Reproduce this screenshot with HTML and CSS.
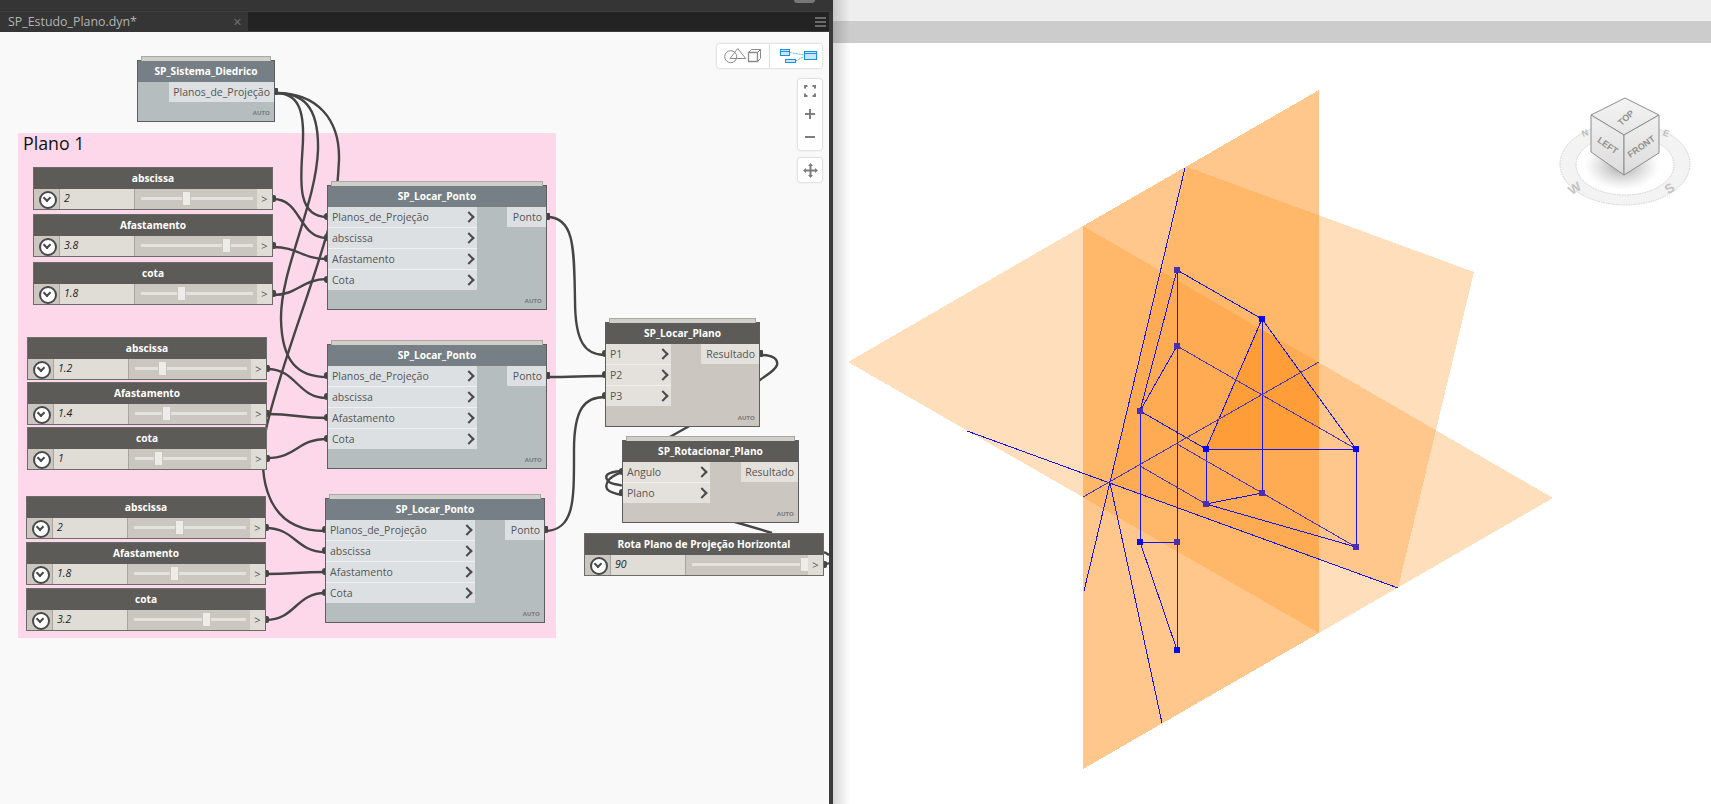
FILE: index.html
```html
<!DOCTYPE html>
<html lang="pt">
<head>
<meta charset="utf-8">
<title>SP_Estudo_Plano.dyn</title>
<link rel="stylesheet" href="styles.css">
</head>
<body>
<div class="app">
  <section class="dynamo">
    <div class="titlebar"><span class="grip"></span></div>
    <div class="tabrow">
      <div class="tab"><span class="tab-name">SP_Estudo_Plano.dyn*</span><span class="tab-close">✕</span></div>
      <div class="tab-rest"><span class="burger"><i></i><i></i><i></i></span></div>
    </div>
    <div class="canvas">
      <div class="group"><span class="group-title">Plano 1</span></div>

      <svg class="wires" viewBox="0 32 829 772" aria-hidden="true">
        <path d="M276 93C298 93 304 110 303 140C302 170 293 217 327 217"/>
        <path d="M276 93C302 93 319 105 318 150C316 205 280 270 281 320C282 362 298 377 327 377"/>
        <path d="M276 93C318 93 340 120 339 160C338 185 336 190 336 200C320 270 285 350 267 425C258 462 258 531 325 531"/>
        <path d="M273 199C302 199 298 238 327 238"/>
        <path d="M273 247C298 247 302 259 327 259"/>
        <path d="M273 295C298 295 302 279 327 279"/>
        <path d="M267 369C297 369 297 398 327 398"/>
        <path d="M267 414C297 414 297 418 327 418"/>
        <path d="M267 458C297 458 297 439 327 439"/>
        <path d="M266 528C295 528 296 552 325 552"/>
        <path d="M266 574C295 574 296 572 325 572"/>
        <path d="M266 620C295 620 296 593 325 593"/>
        <path d="M547 217C575 217 574 250 575 300C575 342 585 355 605 355"/>
        <path d="M547 377C570 377 585 376 605 376"/>
        <path d="M545 531C575 530 574 500 574 450C574 408 585 397 605 397"/>
        <path d="M760 355C775 355 778 360 777 365C775 371 765 376 760 380L700 420L668 438"/>
        <path d="M622 471C606 472 604 476 608 481C611 485 620 484 622 486"/>
        <path d="M622 495C606 492 604 488 608 481C611 476 620 473 622 472"/>
        <path d="M735 522L772 533"/>
        <path d="M824 565L829 563"/>
        <path d="M824 552L829 555"/>
      </svg>

      <!-- Custom nodes -->
      <div class="node node-blue n-sistema">
        <div class="node-head">SP_Sistema_Diedrico</div>
        <div class="node-body">
          <div class="outputs solo"><div class="row out">Planos_de_Projeção</div></div>
        </div>
        <span class="auto">AUTO</span>
      </div>

      <div class="node node-blue n-ponto n-ponto-1">
        <div class="node-head">SP_Locar_Ponto</div>
        <div class="node-body">
          <div class="inputs"><div class="row in">Planos_de_Projeção</div><div class="row in">abscissa</div><div class="row in">Afastamento</div><div class="row in">Cota</div></div>
          <div class="outputs"><div class="row out">Ponto</div></div>
        </div>
        <span class="auto">AUTO</span>
      </div>

      <div class="node node-blue n-ponto n-ponto-2">
        <div class="node-head">SP_Locar_Ponto</div>
        <div class="node-body">
          <div class="inputs"><div class="row in">Planos_de_Projeção</div><div class="row in">abscissa</div><div class="row in">Afastamento</div><div class="row in">Cota</div></div>
          <div class="outputs"><div class="row out">Ponto</div></div>
        </div>
        <span class="auto">AUTO</span>
      </div>

      <div class="node node-blue n-ponto n-ponto-3">
        <div class="node-head">SP_Locar_Ponto</div>
        <div class="node-body">
          <div class="inputs"><div class="row in">Planos_de_Projeção</div><div class="row in">abscissa</div><div class="row in">Afastamento</div><div class="row in">Cota</div></div>
          <div class="outputs"><div class="row out">Ponto</div></div>
        </div>
        <span class="auto">AUTO</span>
      </div>

      <div class="node node-warm n-plano">
        <div class="node-head">SP_Locar_Plano</div>
        <div class="node-body">
          <div class="inputs"><div class="row in">P1</div><div class="row in">P2</div><div class="row in">P3</div></div>
          <div class="outputs"><div class="row out">Resultado</div></div>
        </div>
        <span class="auto">AUTO</span>
      </div>

      <div class="node node-warm n-rotacionar">
        <div class="node-head">SP_Rotacionar_Plano</div>
        <div class="node-body">
          <div class="inputs"><div class="row in">Angulo</div><div class="row in">Plano</div></div>
          <div class="outputs"><div class="row out">Resultado</div></div>
        </div>
        <span class="auto">AUTO</span>
      </div>

      <!-- Sliders -->
      <div class="slider s-1a"><div class="slider-head">abscissa</div><div class="slider-row"><span class="chev"></span><span class="value">2</span><span class="track"><span class="thumb" style="left:52px"></span></span><span class="gt">&gt;</span></div></div>
      <div class="slider s-1b"><div class="slider-head">Afastamento</div><div class="slider-row"><span class="chev"></span><span class="value">3.8</span><span class="track"><span class="thumb" style="left:92px"></span></span><span class="gt">&gt;</span></div></div>
      <div class="slider s-1c"><div class="slider-head">cota</div><div class="slider-row"><span class="chev"></span><span class="value">1.8</span><span class="track"><span class="thumb" style="left:47px"></span></span><span class="gt">&gt;</span></div></div>

      <div class="slider s-2a"><div class="slider-head">abscissa</div><div class="slider-row"><span class="chev"></span><span class="value">1.2</span><span class="track"><span class="thumb" style="left:34px"></span></span><span class="gt">&gt;</span></div></div>
      <div class="slider s-2b"><div class="slider-head">Afastamento</div><div class="slider-row"><span class="chev"></span><span class="value">1.4</span><span class="track"><span class="thumb" style="left:38px"></span></span><span class="gt">&gt;</span></div></div>
      <div class="slider s-2c"><div class="slider-head">cota</div><div class="slider-row"><span class="chev"></span><span class="value">1</span><span class="track"><span class="thumb" style="left:30px"></span></span><span class="gt">&gt;</span></div></div>

      <div class="slider s-3a"><div class="slider-head">abscissa</div><div class="slider-row"><span class="chev"></span><span class="value">2</span><span class="track"><span class="thumb" style="left:52px"></span></span><span class="gt">&gt;</span></div></div>
      <div class="slider s-3b"><div class="slider-head">Afastamento</div><div class="slider-row"><span class="chev"></span><span class="value">1.8</span><span class="track"><span class="thumb" style="left:47px"></span></span><span class="gt">&gt;</span></div></div>
      <div class="slider s-3c"><div class="slider-head">cota</div><div class="slider-row"><span class="chev"></span><span class="value">3.2</span><span class="track"><span class="thumb" style="left:79px"></span></span><span class="gt">&gt;</span></div></div>

      <div class="slider s-rota"><div class="slider-head">Rota Plano de Projeção Horizontal</div><div class="slider-row"><span class="chev"></span><span class="value">90</span><span class="track"><span class="thumb" style="left:119px"></span></span><span class="gt">&gt;</span></div></div>

      <!-- Canvas controls -->
      <div class="controls">
        <div class="toggle">
          <span class="toggle-btn">
            <svg width="52" height="24" viewBox="717 44 52 24">
              <g fill="none" stroke="#8a8a8a" stroke-width="1">
                <circle cx="730.7" cy="56.7" r="6"/>
                <path d="M737.7 48.5L730 58.5H745.7Z"/>
                <path d="M748.5 52.5H757.5V61.5H748.5Z" stroke-width="1.3"/>
                <path d="M748.5 52.5L751.5 49.5H760.5V58.5L757.5 61.5M757.5 52.5L760.5 49.5"/>
              </g>
            </svg>
          </span>
          <span class="toggle-btn">
            <svg width="52" height="24" viewBox="769 44 52 24">
              <g stroke="#55b4f5" stroke-width="1" fill="none">
                <path d="M788.7 52.5L803.3 55M794.7 61L803.3 56.5" stroke-dasharray="2 1"/>
              </g>
              <g fill="#c9e6fb" stroke="#1a8fe8" stroke-width="1">
                <rect x="779.5" y="49.5" width="9" height="6"/>
                <rect x="784.5" y="59.5" width="10" height="3"/>
                <rect x="803.5" y="51.5" width="12" height="8"/>
              </g>
              <path d="M780 51.5H788M804 53.5H815" stroke="#1a8fe8"/>
            </svg>
          </span>
        </div>
        <div class="zoom-box">
          <span class="zoom-btn">
            <svg width="12" height="12" viewBox="0 0 12 12"><path d="M1 3.5V1H3.5M8.5 1H11V3.5M11 8.500V11H8.500M3.500 11H1V8.500" fill="none" stroke="#7d7d7d" stroke-width="2"/></svg>
          </span>
          <span class="zoom-btn">
            <svg width="12" height="12" viewBox="0 0 12 12"><path d="M6 1V11M1 6H11" stroke="#7d7d7d" stroke-width="2"/></svg>
          </span>
          <span class="zoom-btn">
            <svg width="12" height="12" viewBox="0 0 12 12"><path d="M1 6H11" stroke="#7d7d7d" stroke-width="2"/></svg>
          </span>
        </div>
        <div class="pan-box">
          <svg width="15" height="15" viewBox="0 0 15 15"><path d="M7.5 2V13M2 7.5H13" stroke="#7d7d7d" stroke-width="2"/><path d="M7.5 0L10 3H5ZM7.5 15L10 12H5ZM0 7.5L3 5V10ZM15 7.5L12 5V10Z" fill="#7d7d7d"/></svg>
        </div>
      </div>
    </div>
  </section>

  <section class="viewer">
    <div class="viewer-top"></div>
    <div class="viewer-tab"></div>
    <div class="viewport">
      <svg class="scene" viewBox="833 43 878 761" aria-hidden="true">
        <g class="planes">
          <polygon points="1083,226 1319,90 1319,633 1083,769"/>
          <polygon points="1083,226 1319,90 1319,633 1083,769"/>
          <polygon points="848,362 1083,226 1553,498 1319,633"/>
          <polygon points="1187,167 1474,272 1398,588 1110,483"/>
          <polygon class="inner" points="1258,328 1275,337 1319,398 1319,449 1206,449"/>
        </g>
        <g class="lines">
          <path d="M1185 168L1084 591"/>
          <path d="M967 431L1398 588"/>
          <path d="M1110 483L1162 723"/>
          <path d="M1177 270L1262 319L1206 449M1177 270L1140 411L1177 346M1177 270V650L1140 542V411L1206 449"/>
          <path d="M1262 319L1356 449V547L1206 504V449H1356M1262 319V493L1206 504M1140 542H1177"/>
          <path class="dim" d="M1177 346L1356 449M1083 497L1319 362M1140 466L1206 504M1177 444L1356 547"/>
        </g>
        <g class="pts">
          <rect x="1174" y="267" width="6" height="6"/>
          <rect x="1174" y="343" width="6" height="6"/>
          <rect x="1137" y="408" width="6" height="6"/>
          <rect x="1203" y="501" width="6" height="6"/>
          <rect x="1259" y="490" width="6" height="6"/>
          <rect x="1353" y="544" width="6" height="6"/>
          <rect x="1174" y="539" width="6" height="6"/>
        </g>
        <g class="pts bright">
          <rect x="1259" y="316" width="6" height="6"/>
          <rect x="1203" y="446" width="6" height="6"/>
          <rect x="1353" y="446" width="6" height="6"/>
          <rect x="1137" y="539" width="6" height="6"/>
          <rect x="1174" y="647" width="6" height="6"/>
        </g>
      </svg>

      <svg class="navcube" width="140" height="125" viewBox="1555 92 140 125" aria-hidden="true">
        <defs>
          <radialGradient id="cubeShadow">
            <stop offset="0" stop-color="#8e8e8e" stop-opacity=".8"/>
            <stop offset="1" stop-color="#bbb" stop-opacity="0"/>
          </radialGradient>
          <linearGradient id="faceTop" x1="0" y1="0" x2="0" y2="1"><stop offset="0" stop-color="#f4f4f4"/><stop offset="1" stop-color="#e6e6e6"/></linearGradient>
          <linearGradient id="faceSide" x1="0" y1="0" x2="0" y2="1"><stop offset="0" stop-color="#f0f0f0"/><stop offset="1" stop-color="#dcdcdc"/></linearGradient>
        </defs>
        <path fill-rule="evenodd" fill="#f3f3f3" stroke="#cfcfcf" stroke-width="1" stroke-dasharray="1.5 1" d="M1560 164a65 41 0 1 0 130 0a65 41 0 1 0 -130 0ZM1576 165a49 30 0 1 1 98 0a49 30 0 1 1 -98 0Z"/>
        <ellipse cx="1622" cy="166" rx="38" ry="24" fill="url(#cubeShadow)"/>
        <path d="M1625 98L1659 115L1624 135L1591 115Z" fill="url(#faceTop)" stroke="#8d8d8d"/>
        <path d="M1591 115L1624 135V175L1591 152Z" fill="url(#faceSide)" stroke="#8d8d8d"/>
        <path d="M1659 115L1624 135V175L1659 153Z" fill="url(#faceSide)" stroke="#8d8d8d"/>
        <text class="cube-text" transform="translate(1628 120) rotate(-42)" text-anchor="middle">TOP</text>
        <text class="cube-text" transform="translate(1606 148) rotate(35)" text-anchor="middle">LEFT</text>
        <text class="cube-text" transform="translate(1643 149) rotate(-35)" text-anchor="middle">FRONT</text>
        <text class="ring-text" transform="translate(1586 136) rotate(-20)" text-anchor="middle">N</text>
        <text class="ring-text" transform="translate(1665 136) rotate(20)" text-anchor="middle">E</text>
        <text class="ring-text big" transform="translate(1577 192) rotate(-32)" text-anchor="middle">W</text>
        <text class="ring-text big" transform="translate(1672 192) rotate(-35)" text-anchor="middle">S</text>
      </svg>
    </div>
  </section>
</div>
</body>
</html>
```

FILE: styles.css
```css
* { box-sizing: border-box; }
html, body { margin: 0; height: 100%; overflow: hidden; }
body { font-family: "Open Sans", "Liberation Sans", sans-serif; background: #fff; }

.app { display: flex; width: 1711px; height: 804px; }

/* ---------- Dynamo panel ---------- */
.dynamo {
  width: 833px; flex: none; display: flex; flex-direction: column;
  background: #3a3a3a; padding-right: 4px;
  position: relative; z-index: 2;
}
.titlebar { height: 11px; background: #353535; position: relative; flex: none; margin-right: -4px; }
.grip {
  position: absolute; left: 794px; top: 0; width: 21px; height: 3px;
  background: #777; border-radius: 0 0 3px 3px;
}
.tabrow { display: flex; height: 21px; flex: none; border-top: 1px solid #3e3e3e; }
.tab {
  width: 248px; background: #353535; display: flex; align-items: center;
  justify-content: space-between; padding: 0 6px 0 8px;
}
.tab-name { color: #b4b4b4; font-size: 12.4px; line-height: 18px; }
.tab-close { color: #6e6e6e; font-size: 11px; font-weight: 700; font-family: "DejaVu Sans", sans-serif; }
.tab-rest {
  flex: 1; background: #232323; border-bottom: 1px solid #3a3a3a;
  display: flex; align-items: center; justify-content: flex-end; padding-right: 3px;
}
.burger { display: flex; flex-direction: column; gap: 2px; width: 11px; }
.burger i { display: block; height: 2px; background: #6a6a6a; }

.canvas { flex: 1; position: relative; background: #f9f9f9; overflow: hidden; }

.group {
  position: absolute; left: 18px; top: 101px; width: 538px; height: 505px;
  background: #fcd8ea; padding: 0 0 0 5px;
}
.group-title { display: block; font-size: 17.8px; line-height: 20px; color: #111; font-weight: 400; }

.wires { position: absolute; left: 0; top: 0; width: 829px; height: 772px; }
.wires path { fill: none; stroke: #454545; stroke-width: 2.4; }

/* ---------- Nodes ---------- */
.node {
  position: absolute; border: 1px solid #5c5e60; display: flex; flex-direction: column;
}
.node::before {
  content: ""; position: absolute; left: 3px; right: 3px; top: -5px; height: 4px;
  background: #d0cfca; border: 1px solid #a9a8a3; border-bottom: 0;
}
.node-head {
  height: 21px; flex: none; color: #fff; font-weight: 700; font-size: 10.2px; line-height: 21px;
  text-align: center;
}
.node-body { flex: 1; display: flex; justify-content: space-between; align-items: flex-start; }
.inputs, .outputs { display: flex; flex-direction: column; }
.row {
  height: 21px; font-size: 10.5px; line-height: 20px; color: #555; position: relative;
  white-space: nowrap;
}
.row.in { padding-left: 4px; border-bottom: 1px solid #eef0f1; }
.row.in:last-child { border-bottom: 0; height: 20px; }
.row.out { padding: 0 4px; height: 20px; text-align: right; }
.row.in::before, .row.out::after {
  content: ""; position: absolute; top: 6px; width: 3px; height: 7px; background: #454545;
}
.row.in::before { left: -4px; border-radius: 3px 0 0 3px; }
.row.out::after { right: -4px; border-radius: 0 1px 1px 0; }
.n-rotacionar .row.out::after { display: none; }
.row.in::after {
  content: ""; position: absolute; right: 4px; top: 6px; width: 6px; height: 6px;
  border-top: 2px solid #4a4a4a; border-right: 2px solid #4a4a4a; transform: rotate(45deg);
}
.auto {
  position: absolute; right: 4px; bottom: 4px; font-size: 6px; line-height: 7px;
  font-weight: 700; color: #777; letter-spacing: .1px;
}

.node-blue { background: #b6bdbf; }
.node-blue .node-head { background: #757f85; }
.node-blue .row { background: #dce0e2; }
.node-warm { background: #cbc7c0; }
.node-warm .node-head { background: #5d5b58; }
.node-warm .row { background: #e4e1dc; }
.node-warm .row.in { border-bottom-color: #f2f0ed; }

.n-sistema { left: 137px; top: 28px; width: 138px; height: 62px; }
.n-sistema .solo { margin-left: auto; }
.n-sistema .row.out { width: 105px; }

.n-ponto { width: 220px; height: 125px; }
.n-ponto .inputs { width: 149px; }
.n-ponto .row.out { width: 39px; }
.n-ponto-1 { left: 327px; top: 153px; }
.n-ponto-2 { left: 327px; top: 312px; }
.n-ponto-3 { left: 325px; top: 466px; }

.n-plano { left: 605px; top: 290px; width: 155px; height: 105px; }
.n-plano .inputs { width: 65px; }
.n-plano .row.out { width: 58px; }
.n-rotacionar { left: 622px; top: 408px; width: 177px; height: 83px; }
.n-rotacionar .inputs { width: 87px; }
.n-rotacionar .row.out { width: 57px; }

/* ---------- Sliders ---------- */
.slider {
  position: absolute; width: 240px; height: 43px; border: 1px solid #6d6b68;
  background: #cbc7c0; display: flex; flex-direction: column;
}
.slider-head {
  height: 21px; flex: none; background: #5d5b58; color: #fff; font-size: 10.2px;
  font-weight: 700; line-height: 20px; text-align: center;
}
.slider-row { flex: 1; display: flex; align-items: stretch; position: relative; }
.chev {
  width: 25px; flex: none; position: relative;
}
.chev::before {
  content: ""; position: absolute; left: 5px; top: 2px; width: 14px; height: 14px;
  border-radius: 50%; background: #fff; border: 2px solid #47494b;
}
.chev::after {
  content: ""; position: absolute; left: 10px; top: 6px; width: 4px; height: 4px;
  border-right: 2px solid #47494b; border-bottom: 2px solid #47494b; transform: rotate(45deg);
}
.value {
  width: 76px; flex: none; background: #e0ddd7; border-left: 1px solid #a8a59f;
  border-right: 1px solid #a8a59f;
  padding-left: 4px; font-size: 10.5px; font-style: italic; line-height: 18px; color: #222;
}
.track { flex: 1; position: relative; }
.track::before {
  content: ""; position: absolute; left: 6px; right: 4px; top: 8px; height: 3px;
  background: #e4e2dd;
}
.thumb {
  position: absolute; top: 2px; width: 9px; height: 15px; margin-left: -5px;
  background: #eeece8; border: 1px solid #c8c5bf;
}
.gt {
  width: 15px; flex: none; background: #e0ddd7; color: #555; font-size: 11px;
  line-height: 20px; text-align: center; position: relative;
}
.gt::after {
  content: ""; position: absolute; right: -4px; top: 6px; width: 3px; height: 7px;
  background: #454545; border-radius: 0 2px 2px 0;
}

.s-1a { left: 33px; top: 135px; }
.s-1b { left: 33px; top: 182px; }
.s-1c { left: 33px; top: 230px; }
.s-2a { left: 27px; top: 305px; }
.s-2b { left: 27px; top: 350px; }
.s-2c { left: 27px; top: 395px; }
.s-3a { left: 26px; top: 464px; }
.s-3b { left: 26px; top: 510px; }
.s-3c { left: 26px; top: 556px; }
.s-rota { left: 584px; top: 501px; }

/* ---------- Canvas controls ---------- */
.controls { position: absolute; right: 7px; top: 12px; display: flex; flex-direction: column; align-items: flex-end; }
.toggle {
  display: flex; width: 105px; height: 24px; background: #fff; border-radius: 2px;
  box-shadow: 0 0 2px rgba(0,0,0,.3);
}
.toggle-btn { width: 52px; height: 24px; display: block; }
.toggle-btn:first-child { width: 53px; border-right: 1px solid #ddd; }
.toggle svg { display: block; }
.zoom-box {
  width: 24px; height: 71px; margin-top: 11px; background: #fff; border-radius: 2px;
  box-shadow: 0 0 2px rgba(0,0,0,.35);
  display: flex; flex-direction: column; justify-content: space-around; align-items: center;
  padding: 0 0 1px;
}
.zoom-btn { display: flex; height: 23px; align-items: center; }
.pan-box {
  width: 24px; height: 24px; margin-top: 8px; background: #fff; border-radius: 2px;
  box-shadow: 0 0 2px rgba(0,0,0,.35);
  display: flex; align-items: center; justify-content: center;
}

/* ---------- Revit viewer ---------- */
.viewer { flex: 1; display: flex; flex-direction: column; position: relative; }
.viewer::before {
  content: ""; position: absolute; left: 0; top: 0; bottom: 0; width: 17px; z-index: 1;
  background: linear-gradient(90deg, rgba(0,0,0,.16), rgba(0,0,0,0));
}
.viewer-top { height: 21px; flex: none; background: #eee; }
.viewer-tab { height: 22px; flex: none; background: #ccc; }
.viewport { flex: 1; position: relative; background: #fff; overflow: hidden; }
.scene { position: absolute; left: 0; top: 0; width: 878px; height: 761px; }
.planes polygon { fill: rgb(255,145,30); fill-opacity: .3; shape-rendering: crispEdges; }
.planes .inner { fill: rgb(255,140,20); fill-opacity: .42; }
.lines path { fill: none; stroke: #1414f0; stroke-width: 1; shape-rendering: crispEdges; }
.lines .dim { stroke: #4a35c0; }
.pts rect { fill: #4b2eb4; }
.pts.bright rect { fill: #0808ee; }

.navcube { position: absolute; left: 722px; top: 49px; }
.cube-text { font-family: "Liberation Sans", sans-serif; font-size: 9px; fill: #929292; font-weight: 700; }
.ring-text { font-family: "Liberation Sans", sans-serif; font-size: 9px; fill: #bdbdbd; font-weight: 700; }
.ring-text.big { font-size: 13px; fill: #c4c4c4; }
```
